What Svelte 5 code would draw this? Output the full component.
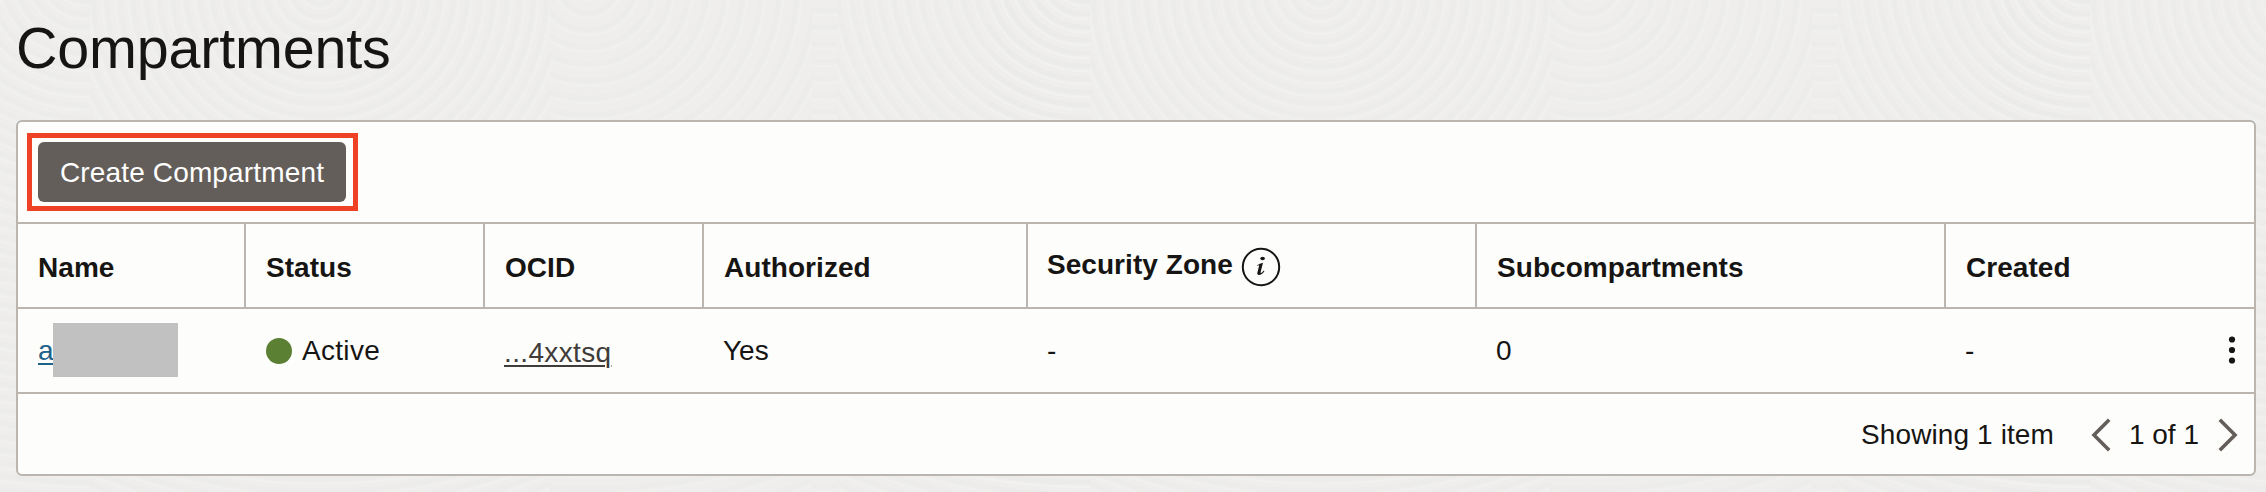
<script>
  const rings = (from, to, step) => Array.from({ length: Math.floor((to - from) / step) }, (_, i) => from + i * step);
  const groups = [
    { cx: 320, cy: -10, x: 90, w: 460, r: rings(14, 700, 12.5) },
    { cx: 588, cy: -14, x: 550, w: 262, r: rings(10, 700, 17) },
    { cx: 1084, cy: -24, x: 838, w: 252, r: rings(12, 700, 13) },
    { cx: 825, cy: -190, x: 812, w: 26, r: rings(200, 700, 17) },
    { cx: 84, cy: -24, x: -10, w: 100, r: rings(12, 700, 13) }
  ];
  const tiles = [0, 1000, 2000];
  const columns = ['Name', 'Status', 'OCID', 'Authorized', 'Security Zone', 'Subcompartments', 'Created'];
</script>

<main>
  <svg class="texture" width="2266" height="492" viewBox="0 0 2266 492" aria-hidden="true">
    <defs>
      {#each groups as g, i}
        <clipPath id={`band${i}`}><rect x={g.x} y="0" width={g.w} height="492" /></clipPath>
      {/each}
    </defs>
    {#each tiles as t}
      <g transform={`translate(${t} 0)`}>
        {#each groups as g, i}
          <g clip-path={`url(#band${i})`} fill="none">
            {#each g.r as r}
              <ellipse cx={g.cx} cy={g.cy} rx={r * 1.06} ry={r} stroke="#eae9e7" stroke-width="4" opacity=".5" />
              <ellipse cx={g.cx} cy={g.cy} rx={r * 1.06 + 5} ry={r + 5} stroke="#f2f1ef" stroke-width="3" opacity=".5" />
            {/each}
          </g>
        {/each}
      </g>
    {/each}
  </svg>

  <h1>Compartments</h1>

  <section class="card">
    <div class="toolbar">
      <div class="highlight"><button>Create Compartment</button></div>
    </div>

    <div class="grid head">
      {#each columns as name}
        <div class="cell" class:zone={name === 'Security Zone'}>
          <span>{name}</span>
          {#if name === 'Security Zone'}
            <svg class="info" width="40" height="40" viewBox="0 0 40 40">
              <circle cx="20" cy="20" r="18.2" fill="none" stroke="#161513" stroke-width="2" />
              <ellipse cx="21.6" cy="11.5" rx="2.3" ry="1.8" fill="#161513" />
              <path d="M16.2 18.2Q18.6 16.4 22 15.8L19.6 25.2Q19.5 26.6 21 25.6L22.8 23.6L23.4 24.2Q20.8 28 18 28Q15.8 27.8 16.4 25.4L18.2 18.6Q17.6 18 16.4 18.9Z" fill="#161513" />
            </svg>
          {/if}
        </div>
      {/each}
    </div>

    <div class="grid row">
      <div class="cell"><a class="name" href="#compartment">a</a><span class="mask"></span></div>
      <div class="cell"><i class="dot"></i><span class="active">Active</span></div>
      <div class="cell"><a class="ocid" href="#ocid">...4xxtsq</a></div>
      <div class="cell"><span class="yes">Yes</span></div>
      <div class="cell"><span class="shift">-</span></div>
      <div class="cell"><span class="shift">0</span></div>
      <div class="cell last">
        <span class="shift">-</span>
        <svg width="8" height="30" viewBox="0 0 8 30" fill="#161513">
          <circle cx="4" cy="4.5" r="3.1" /><circle cx="4" cy="15" r="3.1" /><circle cx="4" cy="25.5" r="3.1" />
        </svg>
      </div>
    </div>

    <footer>
      <span class="count">Showing 1 item</span>
      <svg width="20" height="34" viewBox="0 0 20 34"><path d="M18.2 1.8L3 17L18.2 32.2" /></svg>
      <span class="page">1 of 1</span>
      <svg width="20" height="34" viewBox="0 0 20 34"><path d="M1.8 1.8L17 17L1.8 32.2" /></svg>
    </footer>
  </section>
</main>

<style>
  :global(body) { margin: 0; background: #efeeec; }
  main {
    position: relative;
    box-sizing: border-box;
    width: 2266px;
    height: 492px;
    padding: 0 10px 0 16px;
    overflow: hidden;
    background: #efeeec;
    color: #161513;
    font: 28px/32px "Liberation Sans", Arial, sans-serif;
  }
  .texture { position: absolute; inset: 0; }
  h1 {
    position: relative;
    margin: 0;
    height: 120px;
    padding-top: 16px;
    box-sizing: border-box;
    font-size: 57.5px;
    line-height: 64px;
    font-weight: 400;
    letter-spacing: -.2px;
  }
  .card {
    position: relative;
    box-sizing: border-box;
    height: 356px;
    border: 2px solid #bab5af;
    border-radius: 6px;
    background: #fdfdfb;
  }
  .toolbar {
    box-sizing: border-box;
    height: 102px;
    padding: 11px 0 0 8.5px;
    border-bottom: 2px solid #bab5af;
  }
  .highlight {
    box-sizing: border-box;
    width: 331px;
    height: 78px;
    padding: 4px 0 0 6.5px;
    border: 5px solid #ee4126;
  }
  button {
    display: block;
    width: 308px;
    height: 60px;
    padding: 1px 0 0;
    border: 0;
    border-radius: 6px;
    background: #645e5a;
    color: #fff;
    font: inherit;
    letter-spacing: .15px;
  }
  .grid {
    display: grid;
    grid-template-columns: 228px 239px 219px 324px 449px 469px 1fr;
    box-sizing: border-box;
    height: 85px;
    border-bottom: 2px solid #bab5af;
  }
  .cell {
    display: flex;
    align-items: center;
    box-sizing: border-box;
    padding-left: 20px;
    white-space: nowrap;
  }
  .head .cell { padding-top: 5px; border-right: 2px solid #bab5af; font-weight: 700; letter-spacing: .05px; }
  .head .cell:last-child { border-right: 0; }
  .head .zone { padding-top: 2px; gap: 8px; }
  .zone span { padding-bottom: 4px; }
  .zone span, .shift { margin-left: -1px; }
  a { color: #1f628a; text-decoration-thickness: 2px; text-underline-offset: 3px; }
  .mask { width: 125px; height: 54px; margin-left: -1px; margin-bottom: 1px; background: #c1c1c1; }
  .dot { width: 26px; height: 26px; margin-right: 10px; border-radius: 50%; background: #5b8034; }
  .active { letter-spacing: .3px; }
  .yes { margin-left: -1px; }
  .ocid { margin-left: -1px; padding-top: 4px; color: #3f3c39; letter-spacing: .35px; }
  .last { justify-content: space-between; padding-right: 18px; }
  .last svg { margin-bottom: 2px; }
  footer {
    display: flex;
    align-items: center;
    justify-content: flex-end;
    box-sizing: border-box;
    height: 80px;
    padding: 2px 16px 0 0;
  }
  footer path { fill: none; stroke: #645e5a; stroke-width: 3.6; }
  .count { margin-right: 37px; letter-spacing: .1px; }
  .page { margin: 0 19px 0 18px; }
</style>
